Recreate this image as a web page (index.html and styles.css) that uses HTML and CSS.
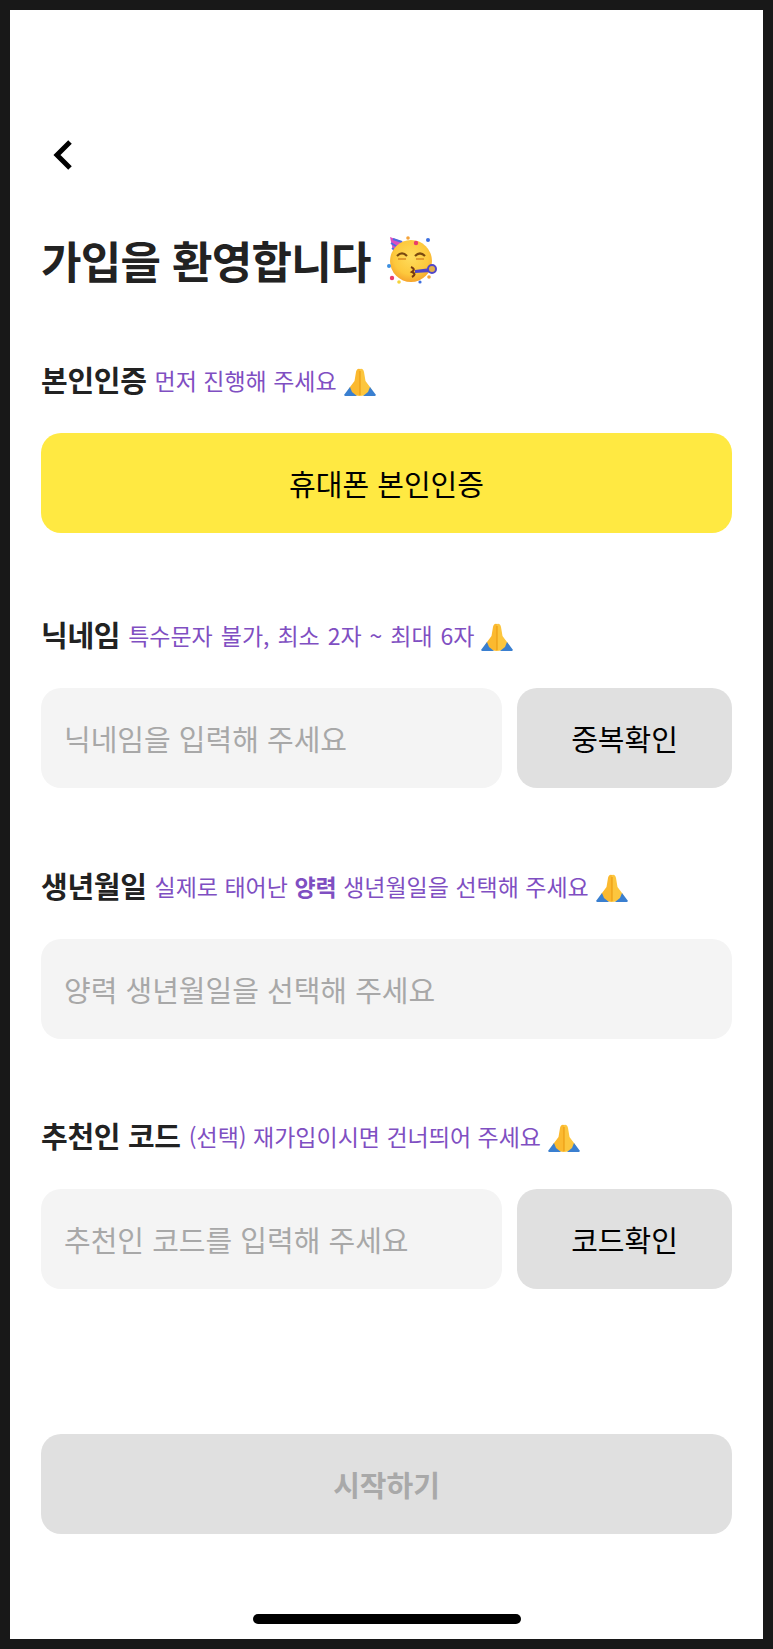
FILE: index.html
```html
<!DOCTYPE html>
<html lang="ko">
<head>
<meta charset="utf-8">
<title>가입</title>
<link rel="stylesheet" href="styles.css">
</head>
<body>
<main class="screen">
  <button class="back" aria-label="뒤로">
    <svg width="22" height="32" viewBox="0 0 22 32"><path d="M19 3 L6 16 L19 29" fill="none" stroke="#000" stroke-width="5"/></svg>
  </button>
  <h1 class="title">가입을 환영합니다
    <svg class="party" width="50" height="48" viewBox="0 0 50 48">
      <defs>
        <radialGradient id="face" cx="50%" cy="40%" r="60%">
          <stop offset="0" stop-color="#fedc5c"/>
          <stop offset=".7" stop-color="#fdc83c"/>
          <stop offset="1" stop-color="#f6a52c"/>
        </radialGradient>
      </defs>
      <path d="M3 1 L19 7 L7 19 Z" fill="#d94fc0"/>
      <path d="M6 3 L15 6 M4 7 L12 12 M5 12 L9 15" stroke="#4d6be0" stroke-width="2" fill="none"/>
      <circle cx="24" cy="25" r="21" fill="url(#face)"/>
      <path d="M10 20 Q15 15 20 20 M28 20 Q33 15 38 20" fill="none" stroke="#7a4a10" stroke-width="2.2"/>
      <path d="M11 23 H19 M29 23 H37" stroke="#d98a25" stroke-width="1.5"/>
      <path d="M24 31 Q29 33 25 36 Q30 38 25 41" fill="none" stroke="#7a3a10" stroke-width="2.2"/>
      <path d="M28 34 L44 32 L44 36 L28 37 Z" fill="#5046c8"/>
      <circle cx="45" cy="33" r="4" fill="#e2b04a" stroke="#5046c8" stroke-width="2"/>
      <circle cx="29" cy="7" r="2.2" fill="#ea3d6c"/>
      <circle cx="41" cy="4" r="2" fill="#3d6fe0"/>
      <circle cx="21" cy="2" r="1.8" fill="#f5a33a"/>
      <circle cx="5" cy="42" r="2.2" fill="#ea3d6c"/>
      <circle cx="2" cy="30" r="2" fill="#3d8fe0"/>
      <circle cx="12" cy="46" r="1.8" fill="#f5d33a"/>
      <circle cx="42" cy="41" r="1.8" fill="#f5a33a"/>
      <circle cx="33" cy="46" r="1.6" fill="#3d6fe0"/>
    </svg>
  </h1>

  <section class="field field-first">
    <h2 class="label">본인인증<span class="hint">먼저 진행해 주세요</span>
      <svg class="pray" width="32" height="30" viewBox="0 0 32 30"><use href="#pray"/></svg></h2>
    <button class="btn btn-yellow">휴대폰 본인인증</button>
  </section>

  <section class="field">
    <h2 class="label">닉네임<span class="hint hint-wide">특수문자 불가, 최소 2자 ~ 최대 6자</span>
      <svg class="pray" width="32" height="30" viewBox="0 0 32 30"><use href="#pray"/></svg></h2>
    <div class="row">
      <div class="input">닉네임을 입력해 주세요</div>
      <button class="btn btn-gray">중복확인</button>
    </div>
  </section>

  <section class="field">
    <h2 class="label">생년월일<span class="hint">실제로 태어난 <b>양력</b> 생년월일을 선택해 주세요</span>
      <svg class="pray" width="32" height="30" viewBox="0 0 32 30"><use href="#pray"/></svg></h2>
    <div class="row">
      <div class="input">양력 생년월일을 선택해 주세요</div>
    </div>
  </section>

  <section class="field field-last">
    <h2 class="label">추천인 코드<span class="hint">(선택) 재가입이시면 건너띄어 주세요</span>
      <svg class="pray" width="32" height="30" viewBox="0 0 32 30"><use href="#pray"/></svg></h2>
    <div class="row">
      <div class="input">추천인 코드를 입력해 주세요</div>
      <button class="btn btn-gray">코드확인</button>
    </div>
  </section>

  <button class="btn btn-start">시작하기</button>
  <div class="home-bar"></div>

  <svg class="defs" width="0" height="0">
    <symbol id="pray" viewBox="0 0 32 30">
      <path d="M16 29 V2 Q13 1 12 5 L10.5 14 L6 20 L3 25 L8 28 Z" fill="#fbb92f"/>
      <path d="M16 29 V2 Q19 1 20 5 L21.5 14 L26 20 L29 25 L24 28 Z" fill="#fcc63e"/>
      <path d="M16 4 V28" stroke="#e8960f" stroke-width="1"/>
      <path d="M6 20 L0 28 L1 29 H13 L8 25 Z" fill="#3a7fd0"/>
      <path d="M26 20 L32 28 L31 29 H19 L24 25 Z" fill="#3a7fd0"/>
    </symbol>
  </svg>
</main>
</body>
</html>
```

FILE: styles.css
```css
* { box-sizing: border-box; }
html, body { margin: 0; padding: 0; background: #181818; }
body { width: 773px; height: 1649px; padding: 10px; font-family: "Noto Sans CJK KR", "Noto Sans", sans-serif; }
.screen {
  position: relative;
  width: 753px;
  height: 1629px;
  background: #fff;
  padding: 125px 31px 0;
  display: flex;
  flex-direction: column;
}
.back { width: 44px; height: 40px; padding: 0 0 0 10px; border: 0; background: none; display: block; }
.back svg { display: block; }
.title {
  margin: 53px 0 0;
  height: 64px;
  display: flex;
  align-items: center;
  gap: 16px;
  font-size: 44px;
  font-weight: 700;
  letter-spacing: -0.7px;
  color: #222;
}
.field { margin-top: 73px; }
.field-first { margin-top: 63px; padding-bottom: 4px; }
.field-last { margin-top: 72px; }
.label {
  margin: 0 0 30px;
  height: 48px;
  display: flex;
  align-items: center;
  white-space: pre;
  font-size: 29px;
  font-weight: 700;
  color: #222;
  letter-spacing: -0.3px;
}
.hint { font-size: 23px; font-weight: 400; color: #7f4fc2; letter-spacing: 0; margin: 2px 0 0 8px; }
.hint b { font-weight: 700; }
.hint-wide { word-spacing: 1.5px; }
.pray { margin: 5px 0 0 7px; }
.row { display: flex; gap: 15px; }
.input {
  flex: 1;
  height: 100px;
  padding: 0 23px;
  display: flex;
  align-items: center;
  background: #f4f4f4;
  border-radius: 20px;
  font-size: 29px;
  color: #a8a8a8;
}
.btn {
  height: 100px;
  border: 0;
  border-radius: 20px;
  font-family: inherit;
  font-size: 29px;
  font-weight: 400;
  color: #000;
}
.btn-yellow { width: 100%; background: #ffe942; }
.btn-gray { width: 215px; background: #e0e0e0; }
.btn-start {
  position: absolute;
  left: 31px;
  right: 31px;
  top: 1424px;
  background: #e0e0e0;
  color: #a9a9a9;
  font-weight: 700;
}
.home-bar {
  position: absolute;
  left: 243px;
  top: 1604px;
  width: 268px;
  height: 10px;
  border-radius: 5px;
  background: #000;
}
.defs { position: absolute; }
```
